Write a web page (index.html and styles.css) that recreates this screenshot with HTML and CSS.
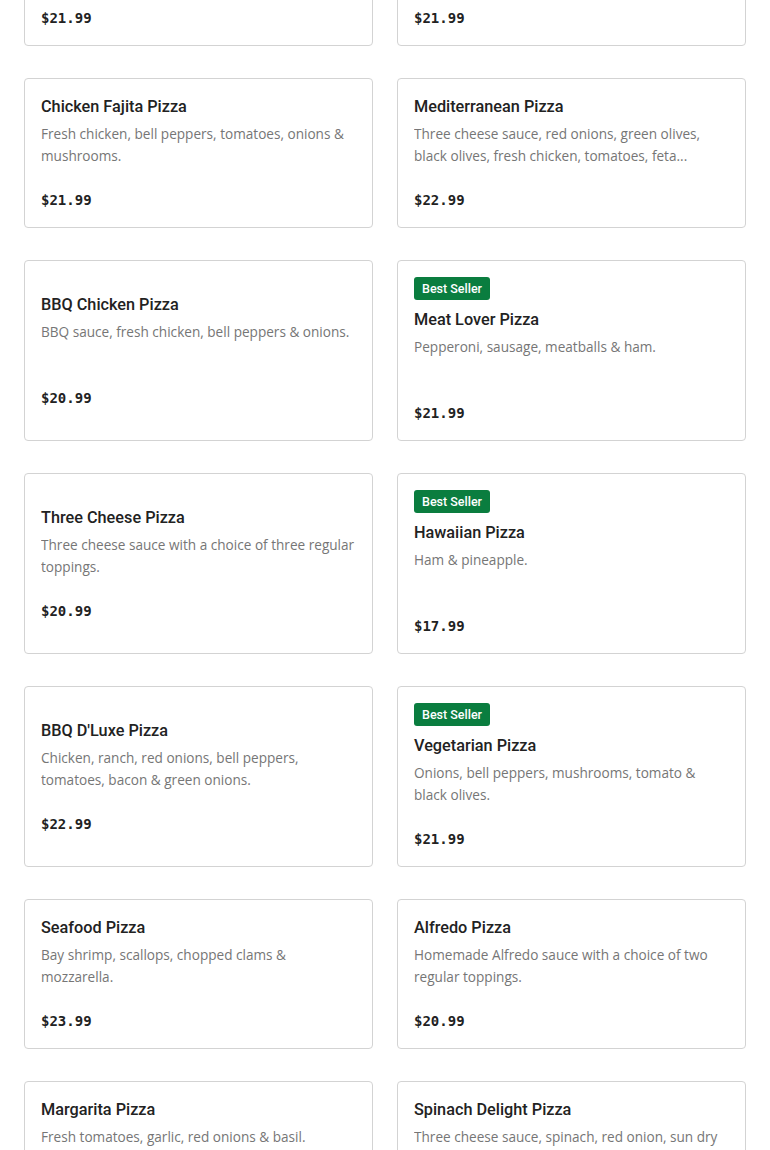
FILE: index.html
```html
<!DOCTYPE html>
<html lang="en">
<head>
<meta charset="utf-8">
<title>Pizza Menu</title>
<link rel="stylesheet" href="styles.css">
</head>
<body>
<main class="menu">
  <article class="card">
    <h3 class="name">Pepperoni Pizza</h3>
    <p class="desc">Pepperoni &amp; mozzarella cheese.</p>
    <div class="price">$21.99</div>
  </article>
  <article class="card">
    <h3 class="name">Supreme Pizza</h3>
    <p class="desc">Pepperoni, sausage, bell peppers, onions &amp; mushrooms.</p>
    <div class="price">$21.99</div>
  </article>

  <article class="card">
    <h3 class="name">Chicken Fajita Pizza</h3>
    <p class="desc">Fresh chicken, bell peppers, tomatoes, onions &amp; mushrooms.</p>
    <div class="price">$21.99</div>
  </article>
  <article class="card">
    <h3 class="name">Mediterranean Pizza</h3>
    <p class="desc">Three cheese sauce, red onions, green olives, black olives, fresh chicken, tomatoes, feta...</p>
    <div class="price">$22.99</div>
  </article>

  <article class="card">
    <h3 class="name">BBQ Chicken Pizza</h3>
    <p class="desc">BBQ sauce, fresh chicken, bell peppers &amp; onions.</p>
    <div class="price">$20.99</div>
  </article>
  <article class="card">
    <span class="badge">Best Seller</span>
    <h3 class="name">Meat Lover Pizza</h3>
    <p class="desc">Pepperoni, sausage, meatballs &amp; ham.</p>
    <div class="price">$21.99</div>
  </article>

  <article class="card">
    <h3 class="name">Three Cheese Pizza</h3>
    <p class="desc">Three cheese sauce with a choice of three regular toppings.</p>
    <div class="price">$20.99</div>
  </article>
  <article class="card">
    <span class="badge">Best Seller</span>
    <h3 class="name">Hawaiian Pizza</h3>
    <p class="desc">Ham &amp; pineapple.</p>
    <div class="price">$17.99</div>
  </article>

  <article class="card">
    <h3 class="name">BBQ D'Luxe Pizza</h3>
    <p class="desc">Chicken, ranch, red onions, bell peppers, tomatoes, bacon &amp; green onions.</p>
    <div class="price">$22.99</div>
  </article>
  <article class="card">
    <span class="badge">Best Seller</span>
    <h3 class="name">Vegetarian Pizza</h3>
    <p class="desc">Onions, bell peppers, mushrooms, tomato &amp; black olives.</p>
    <div class="price">$21.99</div>
  </article>

  <article class="card">
    <h3 class="name">Seafood Pizza</h3>
    <p class="desc">Bay shrimp, scallops, chopped clams &amp; mozzarella.</p>
    <div class="price">$23.99</div>
  </article>
  <article class="card">
    <h3 class="name">Alfredo Pizza</h3>
    <p class="desc">Homemade Alfredo sauce with a choice of two regular toppings.</p>
    <div class="price">$20.99</div>
  </article>

  <article class="card">
    <h3 class="name">Margarita Pizza</h3>
    <p class="desc">Fresh tomatoes, garlic, red onions &amp; basil.</p>
    <div class="price">$19.99</div>
  </article>
  <article class="card">
    <h3 class="name">Spinach Delight Pizza</h3>
    <p class="desc">Three cheese sauce, spinach, red onion, sun dry tomatoes &amp; feta cheese.</p>
    <div class="price">$21.99</div>
  </article>
</main>
</body>
</html>
```

FILE: styles.css
```css
* { box-sizing: border-box; }

html, body {
  margin: 0;
  padding: 0;
  background: #ffffff;
}

body {
  font-family: "Open Sans", "Liberation Sans", Arial, sans-serif;
  color: #202020;
}

.menu {
  display: grid;
  grid-template-columns: 1fr 1fr;
  column-gap: 24px;
  row-gap: 32px;
  padding: 0 24px;
  margin-top: -104px;
}

.card {
  display: flex;
  flex-direction: column;
  justify-content: center;
  align-items: flex-start;
  padding: 16px;
  border: 1px solid #d3d3d3;
  border-radius: 4px;
  background: #fff;
}

.badge {
  display: inline-block;
  height: 23px;
  line-height: 23px;
  padding: 0 8px;
  margin-bottom: 8px;
  border-radius: 3px;
  background: #0a7d3f;
  color: #ffffff;
  font-family: Roboto, "Liberation Sans", sans-serif;
  font-size: 12.5px;
  font-weight: 500;
}

.name {
  margin: 0;
  font-family: Roboto, "Liberation Sans", sans-serif;
  font-size: 16.25px;
  line-height: 24px;
  font-weight: 500;
  color: #222222;
}

.desc {
  margin: 4px 0 0;
  height: 44px;
  font-size: 13.6px;
  line-height: 22px;
  color: #767676;
  display: -webkit-box;
  -webkit-line-clamp: 2;
  -webkit-box-orient: vertical;
  overflow: hidden;
}

.price {
  margin-top: 22px;
  font-family: "DejaVu Sans Mono", "Liberation Mono", monospace;
  font-size: 14px;
  line-height: 22px;
  font-weight: 700;
  color: #222222;
}
```
